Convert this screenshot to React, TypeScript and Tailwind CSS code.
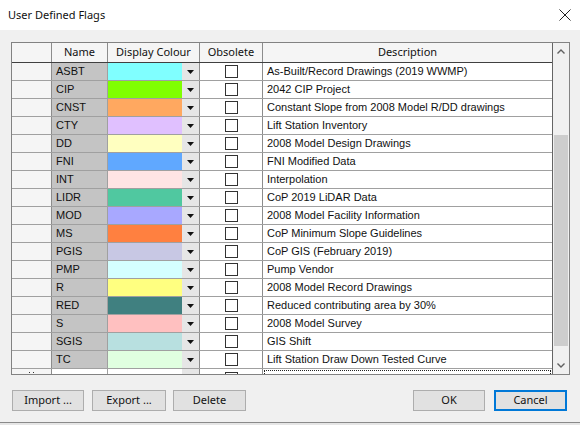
import React from "react";

interface Flag {
  name: string;
  swatch: string;
  description: string;
}

const flags: Flag[] = [
  { name: "ASBT", swatch: "bg-[#80ffff]", description: "As-Built/Record Drawings (2019 WWMP)" },
  { name: "CIP", swatch: "bg-[#80ff00]", description: "2042 CIP Project" },
  { name: "CNST", swatch: "bg-[#ffa860]", description: "Constant Slope from 2008 Model R/DD drawings" },
  { name: "CTY", swatch: "bg-[#e0c0ff]", description: "Lift Station Inventory" },
  { name: "DD", swatch: "bg-[#ffffc0]", description: "2008 Model Design Drawings" },
  { name: "FNI", swatch: "bg-[#60a8ff]", description: "FNI Modified Data" },
  { name: "INT", swatch: "bg-[#ffe4e4]", description: "Interpolation" },
  { name: "LIDR", swatch: "bg-[#50c8a0]", description: "CoP 2019 LiDAR Data" },
  { name: "MOD", swatch: "bg-[#a8a8ff]", description: "2008 Model Facility Information" },
  { name: "MS", swatch: "bg-[#ff8040]", description: "CoP Minimum Slope Guidelines" },
  { name: "PGIS", swatch: "bg-[#c8c8e4]", description: "CoP GIS (February 2019)" },
  { name: "PMP", swatch: "bg-[#d4ffff]", description: "Pump Vendor" },
  { name: "R", swatch: "bg-[#ffff80]", description: "2008 Model Record Drawings" },
  { name: "RED", swatch: "bg-[#408080]", description: "Reduced contributing area by 30%" },
  { name: "S", swatch: "bg-[#ffc0c0]", description: "2008 Model Survey" },
  { name: "SGIS", swatch: "bg-[#b8e0e0]", description: "GIS Shift" },
  { name: "TC", swatch: "bg-[#e0ffe0]", description: "Lift Station Draw Down Tested Curve" },
];

const cellFont = { fontFamily: '"Liberation Sans", Arial, sans-serif' };
const uiFont = { fontFamily: '"Noto Sans", "Open Sans", sans-serif' };

const DropArrow = () => (
  <svg width="7" height="4" viewBox="0 0 7 4">
    <polygon points="0,0 7,0 3.5,4" fill="#111" />
  </svg>
);

const Checkbox = () => (
  <div className="w-[13px] h-[13px] border border-[#333] bg-white" />
);

const FlagRow = ({ flag }: { flag: Flag }) => (
  <div className="flex h-[18px] shrink-0 border-b border-[#a0a0a0] text-[11px] text-[#111]" style={cellFont}>
    <div className="w-[40px] shrink-0 border-r border-[#8c8c8c] bg-[#f5f5f5]" />
    <div className="w-[56px] shrink-0 border-r border-[#a0a0a0] bg-[#c4c4c4] pl-[4px] flex items-center">
      {flag.name}
    </div>
    <div className="w-[92px] shrink-0 border-r border-[#8c8c8c] flex">
      <div className={`flex-1 ${flag.swatch}`} />
      <div className="w-[17px] bg-[#e6e6e6] flex items-center justify-center">
        <DropArrow />
      </div>
    </div>
    <div className="w-[63px] shrink-0 border-r border-[#8c8c8c] bg-white flex items-center justify-center">
      <Checkbox />
    </div>
    <div className="flex-1 bg-white pl-[4px] flex items-center whitespace-nowrap overflow-hidden">
      {flag.description}
    </div>
  </div>
);

const Button = ({ label, w, focused }: { label: string; w: string; focused?: boolean }) => (
  <button
    className={`${w} h-[21px] bg-[#e1e1e1] text-[11px] text-[#111] flex items-center justify-center ${
      focused ? "border-2 border-[#0078d7]" : "border border-[#adadad]"
    }`}
    style={uiFont}
  >
    {label}
  </button>
);

export default function App() {
  return (
    <div className="w-[580px] h-[425px] overflow-hidden bg-[#f0f0f0] flex flex-col">
      {/* title bar */}
      <div className="h-[30px] shrink-0 bg-white flex items-center justify-between pl-[8px] pr-[9px]">
        <span className="text-[11px] text-[#111]" style={uiFont}>
          User Defined Flags
        </span>
        <svg width="12" height="12" viewBox="0 0 12 12">
          <path d="M0.5 0.5 L11.5 11.5 M11.5 0.5 L0.5 11.5" stroke="#222" strokeWidth="1" />
        </svg>
      </div>

      <div className="h-[392px] shrink-0 flex flex-col">
        {/* grid */}
        <div className="ml-[11px] mt-[12px] w-[559px] h-[333px] border border-[#828282] flex overflow-hidden">
          <div className="w-[541px] shrink-0 border-r border-[#646464] flex flex-col overflow-hidden">
            <div className="flex h-[20px] shrink-0 border-b border-[#404040] bg-[#f5f5f5] text-[11px] text-[#111]" style={uiFont}>
              <div className="w-[40px] shrink-0 border-r border-[#8c8c8c]" />
              <div className="w-[56px] shrink-0 border-r border-[#8c8c8c] flex items-center justify-center">Name</div>
              <div className="w-[92px] shrink-0 border-r border-[#8c8c8c] flex items-center justify-center">Display Colour</div>
              <div className="w-[63px] shrink-0 border-r border-[#8c8c8c] flex items-center justify-center">Obsolete</div>
              <div className="flex-1 flex items-center justify-center">Description</div>
            </div>
            {flags.map((f) => (
              <FlagRow key={f.name} flag={f} />
            ))}
            {/* new row, cut off */}
            <div className="flex h-[18px] shrink-0">
              <div className="w-[40px] shrink-0 border-r border-[#8c8c8c] bg-[#f5f5f5] flex justify-center gap-[3px] pt-[3px]">
                <div className="w-px h-px bg-[#333]" />
                <div className="w-px h-px bg-[#333]" />
              </div>
              <div className="w-[56px] shrink-0 border-r border-[#a0a0a0] bg-white" />
              <div className="w-[92px] shrink-0 border-r border-[#8c8c8c] flex bg-white">
                <div className="flex-1" />
                <div className="w-[17px] bg-[#e6e6e6]" />
              </div>
              <div className="w-[63px] shrink-0 border-r border-[#8c8c8c] bg-white flex justify-center pt-[3px]">
                <Checkbox />
              </div>
              <div className="flex-1 bg-white p-px">
                <div className="h-full border border-dotted border-[#222]" />
              </div>
            </div>
          </div>
          {/* scrollbar */}
          <div className="flex-1 bg-[#f0f0f0] flex flex-col">
            <div className="h-[17px] shrink-0 flex items-center justify-center">
              <svg width="8" height="5" viewBox="0 0 8 5">
                <polyline points="0.5,4.5 4,1 7.5,4.5" fill="none" stroke="#606060" strokeWidth="1.4" />
              </svg>
            </div>
            <div className="mt-[75px] mx-px h-[211px] bg-[#cdcdcd]" />
            <div className="flex-1" />
            <div className="h-[17px] shrink-0 flex items-center justify-center">
              <svg width="8" height="5" viewBox="0 0 8 5">
                <polyline points="0.5,0.5 4,4 7.5,0.5" fill="none" stroke="#606060" strokeWidth="1.4" />
              </svg>
            </div>
          </div>
        </div>

        {/* buttons */}
        <div className="mt-[15px] flex items-center pl-[12px] pr-[13px]">
          <Button label="Import ..." w="w-[72px]" />
          <div className="ml-[8px]">
            <Button label="Export ..." w="w-[74px]" />
          </div>
          <div className="ml-[7px]">
            <Button label="Delete" w="w-[73px]" />
          </div>
          <div className="flex-1" />
          <Button label="OK" w="w-[72px]" />
          <div className="ml-[9px]">
            <Button label="Cancel" w="w-[73px]" focused />
          </div>
        </div>
      </div>
      <div className="h-px shrink-0 bg-[#8a8a8a]" />
      <div className="flex-1 bg-[#e6e6e6]" />
    </div>
  );
}
